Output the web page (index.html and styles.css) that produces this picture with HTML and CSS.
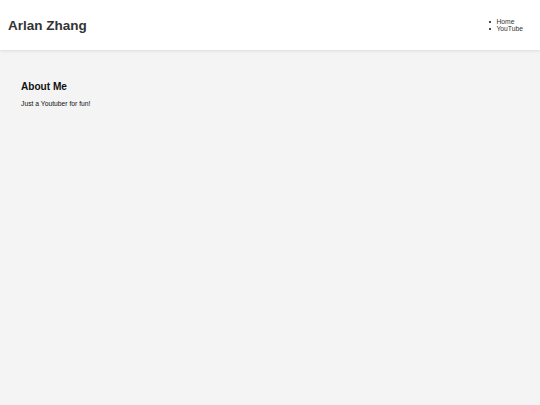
FILE: index.html
```html
<!DOCTYPE html>
<html lang="en">
<head>
<meta charset="utf-8">
<title>Arlan Zhang</title>
<link rel="stylesheet" href="styles.css">
</head>
<body>
<header class="site-header">
  <h1 class="site-title">Arlan Zhang</h1>
  <nav class="site-nav">
    <ul class="nav-list">
      <li class="nav-item">Home</li>
      <li class="nav-item">YouTube</li>
    </ul>
  </nav>
</header>
<main class="content">
  <section class="about">
    <h2 class="about-title">About Me</h2>
    <p class="about-text">Just a Youtuber for fun!</p>
  </section>
</main>
</body>
</html>
```

FILE: styles.css
```css
html, body {
  margin: 0;
  padding: 0;
  height: 100%;
}
body {
  background: #f4f4f4;
  font-family: "Liberation Sans", Arial, sans-serif;
  font-size: 6.75px;
  color: #111;
}
.site-header {
  height: 50px;
  box-sizing: border-box;
  background: #fff;
  box-shadow: 0 1px 3px rgba(0, 0, 0, 0.1);
  display: flex;
  justify-content: space-between;
  align-items: center;
  padding: 0 17px 0 8px;
}
.site-title {
  margin: 0;
  font-size: 13.5px;
  font-weight: bold;
  color: #333;
}
.nav-list {
  margin: 0;
  padding: 0;
  line-height: 7px;
  list-style: none;
  color: #333;
}
.nav-item::before {
  content: "";
  display: inline-block;
  width: 2px;
  height: 2px;
  border-radius: 50%;
  background: #111;
  margin-right: 5px;
  vertical-align: middle;
}
.content {
  padding: 31px 21px;
}
.about-title {
  margin: 0 0 8px;
  font-size: 10.1px;
  font-weight: bold;
}
.about-text {
  margin: 0;
}
```
